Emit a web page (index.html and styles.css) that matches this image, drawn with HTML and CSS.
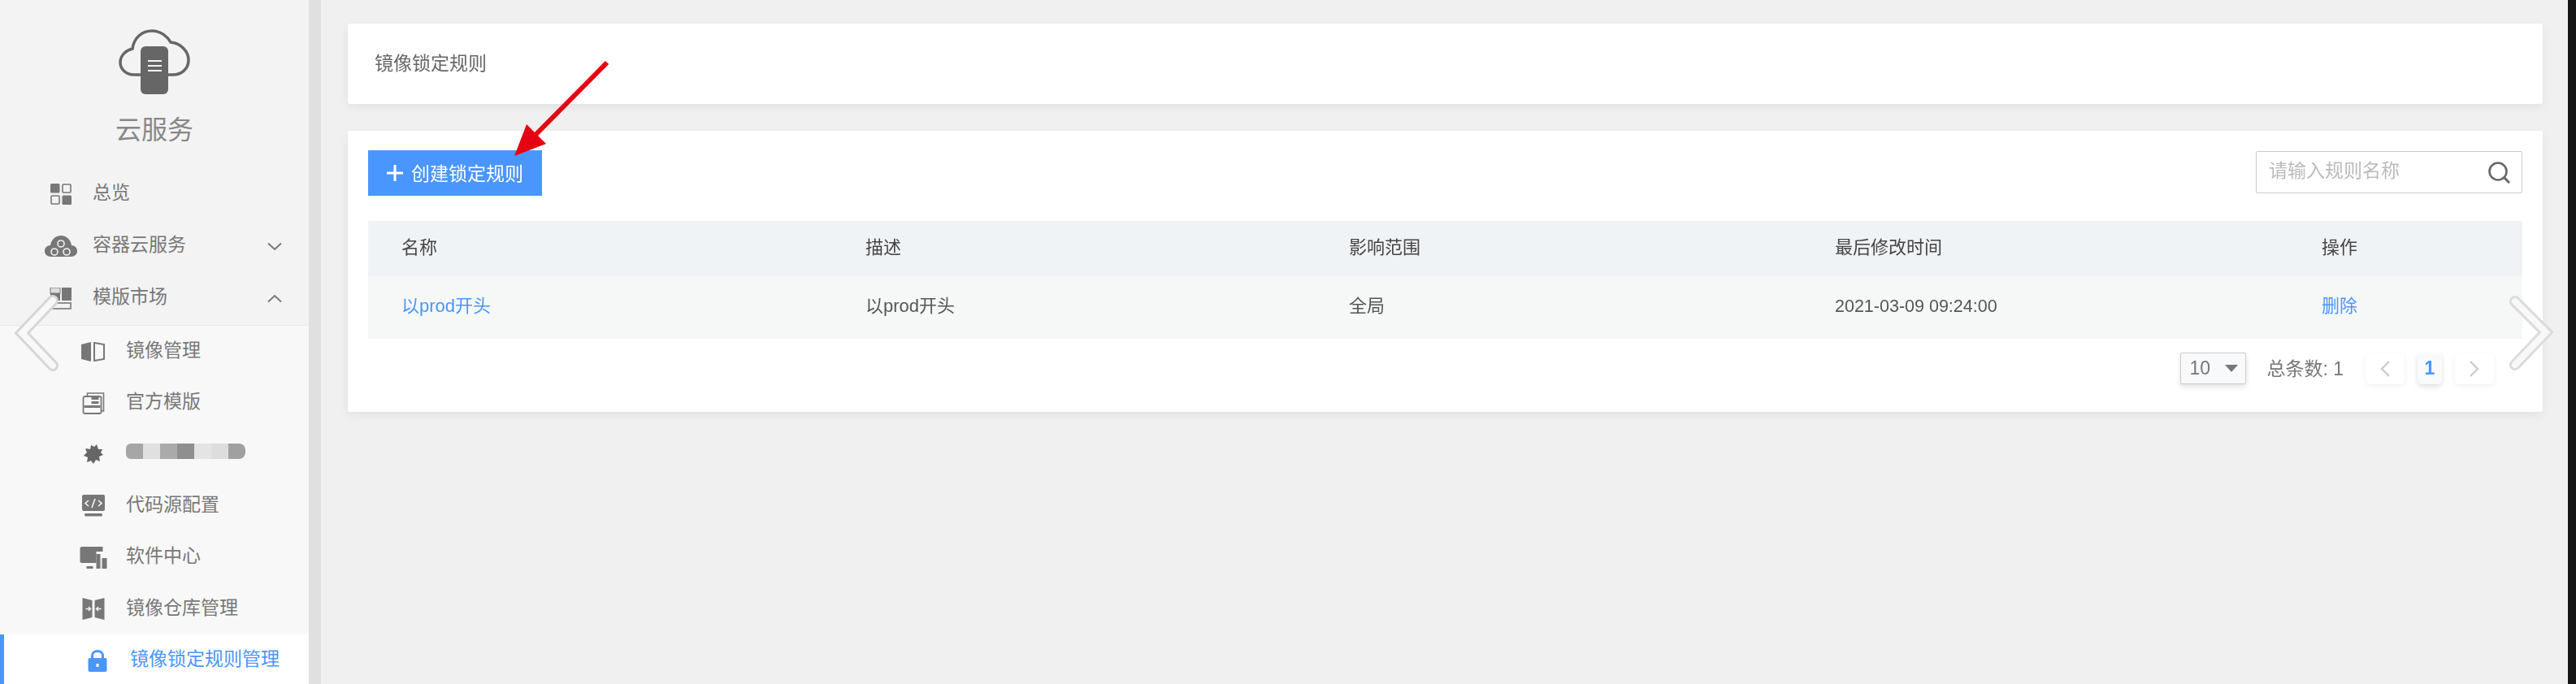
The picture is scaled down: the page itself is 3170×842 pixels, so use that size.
FILE: index.html
```html
<!DOCTYPE html>
<html lang="zh-CN">
<head>
  <meta charset="UTF-8" />
  <title>镜像锁定规则</title>
  <link rel="stylesheet" href="styles.css">
</head>
<body>
<div class="app">
  <!-- Sidebar -->
  <aside class="sidebar">
    <div class="brand">
      <svg class="brand-logo" viewBox="145 35 90 84">
        <path d="M173 92H165C155 92 148 85 148 77C148 68 155 62 163 60C165 46 175 38 187 38C198 38 206 45 210 52C222 53 232 63 232 74C232 85 223 92 213 92H207" fill="none" stroke="#666" stroke-width="3.5"/>
        <rect x="173" y="57" width="34" height="59" rx="6" fill="#666"/>
        <path d="M182 75H199M182 81H199M182 87H199" stroke="#f3f3f3" stroke-width="2"/>
      </svg>
      <div class="brand-name">云服务</div>
    </div>

    <div class="nav-item">
      <svg class="nav-icon" width="26" height="26" viewBox="0 0 26 26">
        <rect x="0" y="0" width="11.5" height="11.5" rx="1.5" fill="#777"/>
        <rect x="15" y="1" width="10" height="10" rx="1" fill="none" stroke="#777" stroke-width="1.6"/>
        <rect x="1" y="15" width="10" height="10" rx="1" fill="none" stroke="#777" stroke-width="1.6"/>
        <rect x="14.5" y="14.5" width="11.5" height="11.5" rx="1.5" fill="#777"/>
      </svg>
      <span>总览</span>
    </div>
    <div class="nav-item">
      <svg class="nav-icon" width="40" height="27" viewBox="0 0 40 27">
        <path d="M8 26C3 26 0 23 0 19C0 15 3 12 7 12C8 5 13 0 20 0C27 0 32 5 33 12C37 12 40 15 40 19C40 23 37 26 32 26Z" fill="#777"/>
        <circle cx="20" cy="10" r="4" fill="none" stroke="#f3f3f3" stroke-width="1.6"/>
        <circle cx="12" cy="20" r="4" fill="none" stroke="#f3f3f3" stroke-width="1.6"/>
        <circle cx="27" cy="20" r="4" fill="none" stroke="#f3f3f3" stroke-width="1.6"/>
      </svg>
      <span>容器云服务</span>
      <svg class="caret" width="18" height="11" viewBox="0 0 18 11"><path d="M1 1.500L9 9L17 1.500" fill="none" stroke="#777" stroke-width="2"/></svg>
    </div>
    <div class="nav-item">
      <svg class="nav-icon" width="26" height="27" viewBox="0 0 26 27">
        <rect x="0" y="0" width="12" height="7" fill="#ddd" stroke="#777" stroke-width="1"/>
        <rect x="0" y="7" width="12" height="9" fill="#777"/>
        <rect x="14" y="0" width="12" height="16" fill="#777"/>
        <rect x="1" y="19" width="24" height="7" fill="none" stroke="#777" stroke-width="1.6"/>
      </svg>
      <span>模版市场</span>
      <svg class="caret" width="18" height="11" viewBox="0 0 18 11"><path d="M1 9.500L9 2L17 9.500" fill="none" stroke="#777" stroke-width="2"/></svg>
    </div>

    <div class="submenu">
      <div class="sub-item">
        <svg class="nav-icon" width="30" height="24" viewBox="0 0 30 24">
          <path d="M0 3L12 0V24L0 21Z" fill="#777"/>
          <path d="M16 1L28 3V21L16 23Z" fill="none" stroke="#777" stroke-width="2"/>
        </svg>
        <span>镜像管理</span>
      </div>
      <div class="sub-item">
        <svg class="nav-icon" width="27" height="27" viewBox="0 0 27 27">
          <path d="M6 4V1H26V23H23" fill="none" stroke="#777" stroke-width="1.600"/>
          <rect x="1" y="5" width="22" height="21" rx="2" fill="none" stroke="#777" stroke-width="1.800"/>
          <rect x="11" y="6" width="9" height="3" fill="#777"/>
          <rect x="11" y="11" width="9" height="3" fill="#777"/>
          <rect x="2" y="16" width="20" height="3" fill="#777"/>
        </svg>
        <span>官方模版</span>
      </div>
      <div class="sub-item">
        <svg class="nav-icon" width="24" height="24" viewBox="0 0 24 24">
          <path d="M9 1L13 3L16 0L18 6L23 6L21 10L24 13L19 15L20 21L15 19L12 24L9 20L4 22L5 16L0 14L4 10L2 5L8 6Z" fill="#666"/>
        </svg>
        <span class="mosaic"><i class="m1"></i><i class="m2"></i><i class="m3"></i><i class="m4"></i><i class="m5"></i><i class="m6"></i><i class="m7"></i></span>
      </div>
      <div class="sub-item">
        <svg class="nav-icon" width="30" height="27" viewBox="0 0 30 27">
          <rect x="1" y="0" width="28" height="20" rx="2" fill="#777"/>
          <path d="M9 7L5 10.500L9 14M21 7L25 10.500L21 14M17 5L13 16" fill="none" stroke="#f8f8f8" stroke-width="1.600"/>
          <rect x="4" y="23" width="22" height="3.500" rx="1.500" fill="#777"/>
        </svg>
        <span>代码源配置</span>
      </div>
      <div class="sub-item">
        <svg class="nav-icon" width="33" height="27" viewBox="0 0 33 27">
          <path d="M2 0H28V6H20V20H2C1 20 0 19 0 18V2C0 1 1 0 2 0Z" fill="#777"/>
          <rect x="8" y="24" width="8" height="3" fill="#777"/>
          <rect x="20" y="9" width="5" height="18" fill="#777"/>
          <rect x="27" y="14" width="6" height="13" fill="#777"/>
        </svg>
        <span>软件中心</span>
      </div>
      <div class="sub-item">
        <svg class="nav-icon" width="27" height="27" viewBox="0 0 27 27">
          <path d="M0 0L12 3V24L0 27Z" fill="#777"/>
          <path d="M27 0L15 3V24L27 27Z" fill="#777"/>
          <path d="M4 13.500H10M7.500 11L10 13.500L7.500 16M23 13.500H17M19.500 11L17 13.500L19.500 16" fill="none" stroke="#f8f8f8" stroke-width="1.300"/>
        </svg>
        <span>镜像仓库管理</span>
      </div>
      <div class="sub-item active">
        <svg class="nav-icon" width="23" height="27" viewBox="0 0 23 27">
          <path d="M5 11V7C5 3.500 8 1.500 11.500 1.500C15 1.500 18 3.500 18 7V11" fill="none" stroke="#4a96ff" stroke-width="3"/>
          <rect x="0" y="10" width="23" height="17" rx="2" fill="#4a96ff"/>
          <rect x="10" y="17" width="3" height="4" fill="#fff"/>
        </svg>
        <span>镜像锁定规则管理</span>
      </div>
    </div>
  </aside>
  <div class="sidebar-edge"></div>

  <!-- Main content -->
  <main class="main">
    <section class="card title-card"><span>镜像锁定规则</span></section>

    <section class="card list-card">
      <div class="toolbar">
        <button class="btn-create">
          <svg width="20" height="20" viewBox="0 0 20 20"><path d="M10 0V20M0 10H20" stroke="#fff" stroke-width="3"/></svg>
          <span>创建锁定规则</span>
        </button>
        <div class="search">
          <input type="text" placeholder="请输入规则名称" />
          <svg width="27" height="27" viewBox="0 0 27 27">
            <circle cx="12" cy="12" r="10.500" fill="none" stroke="#666" stroke-width="2.600"/>
            <path d="M19 19L26 26" stroke="#666" stroke-width="3"/>
          </svg>
        </div>
      </div>

      <div class="table">
        <div class="table-row table-head">
          <div>名称</div><div>描述</div><div>影响范围</div><div>最后修改时间</div><div>操作</div>
        </div>
        <div class="table-row table-body">
          <div><a class="link">以prod开头</a></div>
          <div>以prod开头</div>
          <div>全局</div>
          <div class="date">2021-03-09 09:24:00</div>
          <div><a class="link">删除</a></div>
        </div>
      </div>

      <div class="pager">
        <div class="page-size">10<i class="size-caret"></i></div>
        <div class="total">总条数: 1</div>
        <div class="page-btn">
          <svg width="14" height="22" viewBox="0 0 14 22"><path d="M12 2L3 11L12 20" fill="none" stroke="#ccc" stroke-width="2.400"/></svg>
        </div>
        <div class="page-btn current">1</div>
        <div class="page-btn">
          <svg width="14" height="22" viewBox="0 0 14 22"><path d="M2 2L11 11L2 20" fill="none" stroke="#ccc" stroke-width="2.400"/></svg>
        </div>
      </div>
    </section>
  </main>
  <div class="window-edge"></div>

  <!-- Things lying over the page: gallery arrows and the red callout -->
  <svg class="overlay" width="3170" height="842" viewBox="0 0 3170 842">
    <g fill="none" stroke-linecap="round" stroke-linejoin="miter">
      <path d="M65 370L27 410L65 450" stroke="#d6d6d6" stroke-width="14"/>
      <path d="M65 370L27 410L65 450" stroke="#f8f8f8" stroke-width="8"/>
      <path d="M3095 371L3133 409L3095 449" stroke="#dcdcdc" stroke-width="14"/>
      <path d="M3095 371L3133 409L3095 449" stroke="#f8f8f8" stroke-width="8"/>
    </g>
    <path d="M747 77L655 170" stroke="#e60012" stroke-width="6"/>
    <path d="M648 153L672 177L633 192Z" fill="#e60012"/>
  </svg>
</div>
</body>
</html>
```

FILE: styles.css
```css
* {
  box-sizing: border-box;
}

html, body {
  margin: 0;
  height: 100%;
  overflow: hidden;
}

body {
  font-family: "Liberation Sans", "Noto Sans CJK SC", sans-serif;
  font-size: 23px;
  color: #666;
  background: #f0f0f0;
}

.app {
  position: relative;
  display: flex;
  height: 842px;
  filter: blur(0.5px);
}

/* Sidebar */
.sidebar {
  width: 380px;
  flex-shrink: 0;
  background: #f3f3f3;
  overflow: hidden;
}

.sidebar-edge {
  width: 15px;
  flex-shrink: 0;
  background: #e0e0e0;
}

.brand {
  height: 207px;
  padding-top: 35px;
  display: flex;
  flex-direction: column;
  align-items: center;
}

.brand-logo {
  width: 90px;
  height: 84px;
}

.brand-name {
  margin-top: 19px;
  font-size: 32px;
  line-height: 44px;
  color: #888;
}

.nav-item {
  height: 64px;
  padding-left: 55px;
  display: flex;
  align-items: center;
  gap: 19px;
  color: #777;
}

.nav-icon {
  display: block;
  flex: none;
  width: 40px;
}

.nav-item span,
.sub-item span {
  margin-bottom: 8px;
}

.caret {
  margin-left: auto;
  margin-right: 33px;
}

.submenu {
  margin-top: 1px;
  background: #f8f8f8;
  border-top: 1px solid #e8e8e8;
}

.sub-item {
  height: 63.4px;
  padding-left: 95px;
  display: flex;
  align-items: center;
  gap: 20px;
  color: #777;
}

.sub-item.active {
  height: 64px;
  background: #fff;
  border-left: 5px solid #4a96ff;
  color: #4a96ff;
}

.mosaic {
  display: flex;
  height: 19px;
}

.mosaic i {
  width: 21px;
}

.m1 { background: #a6a6a6; border-radius: 6px 0 0 6px; }
.m2 { background: #e0e0e0; }
.m3 { background: #aaaaaa; }
.m4 { background: #8f8f8f; }
.m5 { background: #e4e4e4; }
.m6 { background: #dddddd; }
.m7 { background: #a0a0a0; border-radius: 0 8px 8px 0; }

/* Main content */
.main {
  flex: 1;
  min-width: 0;
  padding: 29px 31px 0 33px;
  display: flex;
  flex-direction: column;
  gap: 33px;
}

.window-edge {
  width: 10px;
  flex-shrink: 0;
  background: #161616;
}

.card {
  background: #fff;
  border-radius: 3px;
  box-shadow: 0 4px 12px rgba(0, 0, 0, 0.06);
}

.title-card {
  height: 99px;
  padding: 0 0 5px 33px;
  display: flex;
  align-items: center;
  color: #666;
}

.list-card {
  height: 346px;
  padding: 24px 25px 0 25px;
}

.toolbar {
  display: flex;
  justify-content: space-between;
  align-items: flex-start;
  height: 87px;
}

.btn-create {
  width: 214px;
  height: 56px;
  padding: 0;
  border: none;
  background: #4a96ff;
  color: #fff;
  font: inherit;
  display: flex;
  align-items: center;
  justify-content: center;
  gap: 10px;
}

.btn-create span {
  margin-bottom: 3px;
}

.search {
  width: 328px;
  height: 52px;
  margin-top: 1px;
  padding: 0 14px 0 15px;
  display: flex;
  align-items: center;
  border: 1.500px solid #ccc;
  border-radius: 2px;
  background: #fff;
}

.search input {
  flex: 1;
  min-width: 0;
  border: none;
  outline: none;
  padding: 0 0 4px;
  font: inherit;
  color: #666;
  background: transparent;
}

.search input::placeholder {
  color: #bbb;
}

.table {
  font-size: 22px;
}

.table-row {
  display: grid;
  grid-template-columns: 571px 595px 598px 599px 288px;
  align-items: center;
}

.table-row > div {
  padding: 0 0 9px 41px;
}

.table-head {
  height: 68px;
  background: #f0f3f6;
  color: #444;
}

.table-body {
  height: 77px;
  background: #f6f8f8;
  color: #555;
}

.table-body .date {
  padding-bottom: 2px;
  font-size: 21.500px;
}

.link {
  color: #4a96ff;
}

.pager {
  margin-top: 17px;
  padding-right: 35px;
  display: flex;
  justify-content: flex-end;
  align-items: center;
}

.page-size {
  width: 81px;
  height: 39px;
  padding-left: 10px;
  display: flex;
  align-items: center;
  font-size: 23px;
  color: #777;
  background: #f8f9fb;
  border: 1.500px solid #ccc;
  border-radius: 2px;
  box-shadow: 0 3px 6px rgba(0, 0, 0, 0.12);
}

.size-caret {
  margin-left: auto;
  margin-right: 9px;
  border-left: 8px solid transparent;
  border-right: 8px solid transparent;
  border-top: 9px solid #777;
}

.total {
  margin-left: 25px;
  margin-right: 27px;
  padding-bottom: 4px;
  color: #777;
}

.page-btn {
  width: 48px;
  height: 38px;
  display: flex;
  align-items: center;
  justify-content: center;
  border-radius: 5px;
  background: #fff;
  box-shadow: 0 2px 6px rgba(0, 0, 0, 0.06);
}

.page-btn.current {
  width: 30px;
  margin: 0 16px;
  background: #f9fafc;
  color: #4a96ff;
  font-weight: 700;
  box-shadow: 0 3px 6px rgba(0, 0, 0, 0.12);
}

.overlay {
  position: absolute;
  top: 0;
  left: 0;
  pointer-events: none;
}
```
